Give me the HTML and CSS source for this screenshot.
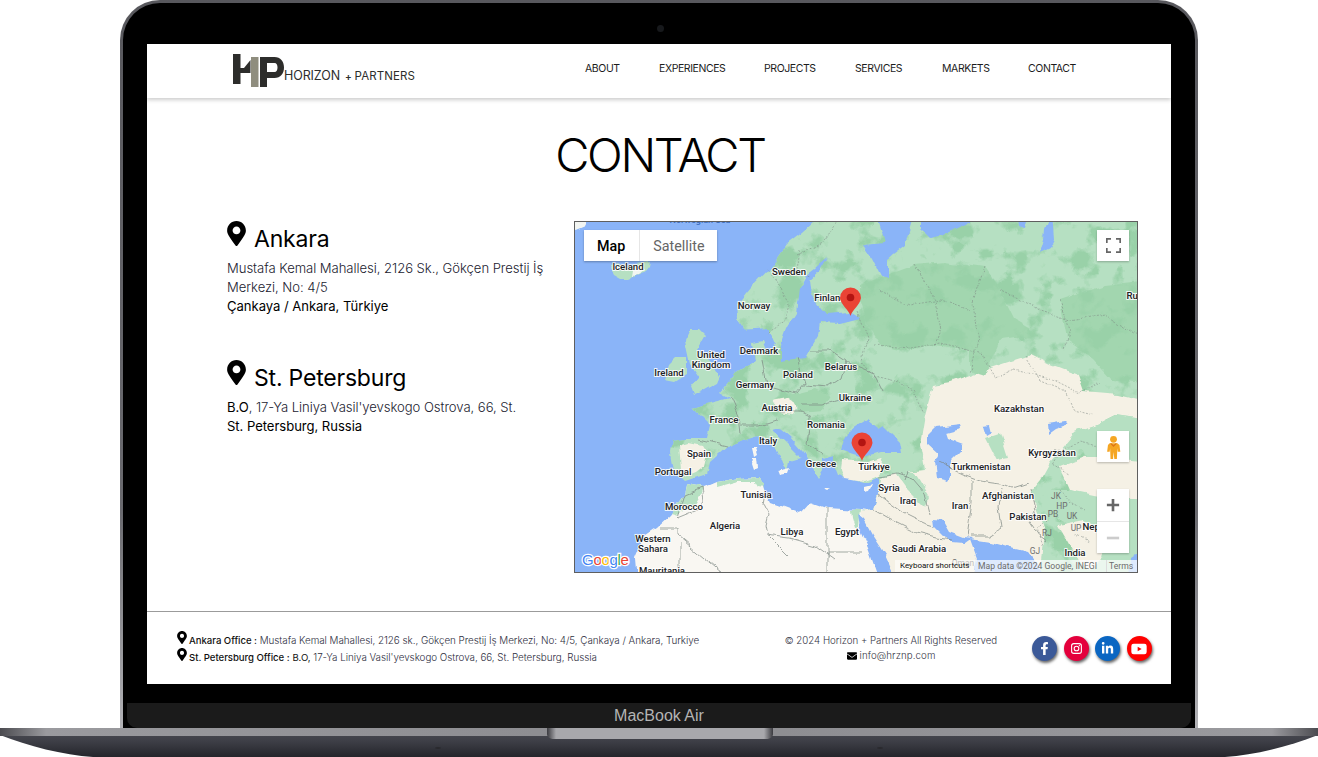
FILE: index.html
```html
<!DOCTYPE html>
<html lang="en">
<head>
<meta charset="utf-8">
<title>Horizon + Partners - Contact</title>
<link rel="stylesheet" href="styles.css">
</head>
<body>
<div class="stage">
  <div class="lid">
    <div class="camera"></div>
    <div class="screen">
      <header class="topbar">
        <a class="logo">
          <svg class="logo-mark" viewBox="0 0 52 34" aria-hidden="true">
            <path class="lm-dark" d="M0 0h7.500v30H0zM7.500 14h3.500l6.500-8v13H7.500z"/>
            <path class="lm-grey" d="M18 3h7.500v30H18z"/>
            <path class="lm-dark" d="M27 3h14.500c6 0 9.500 4.500 9.500 10.500S47.500 24 41.500 24H34v9h-7zM34 9v9h7.500c2 0 3-2 3-4.500S43.500 9 41.500 9z"/>
          </svg>
          <span class="logo-text">HORIZON<span class="logo-plus">+</span><span class="logo-second">PARTNERS</span></span>
        </a>
        <nav class="menu">
          <a class="w34">ABOUT</a>
          <a class="w65">EXPERIENCES</a>
          <a class="w51">PROJECTS</a>
          <a class="w47">SERVICES</a>
          <a class="w46">MARKETS</a>
          <a class="w50">CONTACT</a>
        </nav>
      </header>

      <main class="content">
        <h1 class="page-title">CONTACT</h1>
        <div class="contact-grid">
          <section class="offices">
            <article class="office office-first">
              <h2 class="office-name">
                <svg class="pin" viewBox="0 0 384 512" aria-hidden="true"><path d="M172.268 501.670C26.970 291.031 0 260.235 0 192 0 85.961 85.961 0 192 0s192 85.961 192 192c0 68.235-26.970 99.031-172.268 309.670-9.535 13.774-29.930 13.773-39.464 0zM192 272c44.183 0 80-35.817 80-80s-35.817-80-80-80-80 35.817-80 80 35.817 80 80 80z"/></svg>
                <span>Ankara</span>
              </h2>
              <p class="addr">Mustafa Kemal Mahallesi, 2126 Sk., Gökçen Prestij İş Merkezi, No: 4/5</p>
              <p class="addr strong">Çankaya / Ankara, Türkiye</p>
            </article>
            <article class="office">
              <h2 class="office-name">
                <svg class="pin" viewBox="0 0 384 512" aria-hidden="true"><path d="M172.268 501.670C26.970 291.031 0 260.235 0 192 0 85.961 85.961 0 192 0s192 85.961 192 192c0 68.235-26.970 99.031-172.268 309.670-9.535 13.774-29.930 13.773-39.464 0zM192 272c44.183 0 80-35.817 80-80s-35.817-80-80-80-80 35.817-80 80 35.817 80 80 80z"/></svg>
                <span>St. Petersburg</span>
              </h2>
              <p class="addr"><span class="dark">B.O</span>, 17-Ya Liniya Vasil'yevskogo Ostrova, 66, St.</p>
              <p class="addr strong">St. Petersburg, Russia</p>
            </article>
          </section>

          <div class="map">
            <svg class="map-canvas" viewBox="575 222 562 350" aria-label="Map">
              <defs>
                <filter id="rough" filterUnits="userSpaceOnUse" x="555" y="200" width="610" height="395" color-interpolation-filters="sRGB">
                  <feTurbulence type="fractalNoise" baseFrequency=".055" numOctaves="4" seed="7" result="n"/>
                  <feDisplacementMap in="SourceGraphic" in2="n" scale="7" xChannelSelector="R" yChannelSelector="G"/>
                </filter>
                <filter id="mottle" filterUnits="userSpaceOnUse" x="555" y="200" width="610" height="395" color-interpolation-filters="sRGB">
                  <feTurbulence type="fractalNoise" baseFrequency=".04" numOctaves="4" seed="11" result="n"/>
                  <feColorMatrix in="n" type="matrix" values="0 0 0 0 .6  0 0 0 0 .82  0 0 0 0 .66  7 0 0 0 -3.6" result="spots"/>
                  <feComposite in="spots" in2="SourceAlpha" operator="in" result="s"/>
                  <feMerge><feMergeNode in="SourceGraphic"/><feMergeNode in="s"/></feMerge>
                </filter>
              </defs>
              <rect class="sea" x="575" y="222" width="562" height="350"/>
              <g filter="url(#rough)">
                <!-- Greenland, Iceland -->
                <path class="ice" d="M570 215h21l-6 11-7 3-8 2z"/>
                <path class="green" d="M612 265l6-2 4 3 12-1 8-1 8-1-1 5-4 5-9 3-7 3-8 0-7-4-3-6z"/>
                <path class="ice" d="M634 270l7-2 2 3-5 4-5 1z"/>
                <!-- British isles -->
                <path class="green" d="M690 330l8 0 7 7-7 12 15 15 7 12-3 7-13 7-10 5-3-8 8-10-9-13-5-23z"/>
                <path class="green" d="M675 358l12 0 0 16-13 8-10-2 5-16z"/>
                <!-- Africa -->
                <path class="sand" d="M637 582L635 558 645 535 657 527 670 515 685 495 687 485 703 488 717 482 740 478 760 477 765 492 770 502 787 508 800 513 810 502 827 508 860 510 872 512 900 582z"/>
                <path class="green" d="M685 495l2-10 16 3-2 6-6 10-8 5-9 6-7-2 8-10zM717 482l23-4 20-1 4 10-6-1-3-5-16 0-22 6zM851 510l9 0-2 18-3 0-3-10z"/>
                <!-- Eurasia -->
                <path class="green" filter="url(#mottle)" d="M825 212L803 232 786 245 770 268 752 287 737 305 738 320 745 330 752 342 755 362 737 372 720 392 730 398 703 405 693 408 710 425 707 438 685 438 672 440 670 452 673 470 685 482 707 475 710 462 727 447 747 438 757 435 770 445 783 458 788 470 790 460 800 457 785 442 772 430 779 428 790 437 803 452 810 465 818 478 823 470 823 458 833 455 833 462 838 475 863 482 867 482 878 477 878 495 873 510 860 512 900 582 1150 582 1150 212z"/>
                <!-- dry regions -->
                <path class="tan" d="M933 385L950 382 990 368 1030 355 1050 365 1077 375 1083 392 1118 395 1150 403 1150 420 1115 415 1095 425 1075 432 1060 450 1050 462 1040 480 1030 492 1045 530 1040 582 900 582 870 540 860 512 873 510 878 495 880 478 905 472 925 470 920 445 925 415z"/>
                <path class="tan" d="M1060 468L1085 458 1115 458 1150 462 1150 500 1115 498 1085 495 1070 490z"/>
                <path class="tan" d="M678 445l10-3 14 3 5 8-3 14-8 6-10 4-6-8z"/>
                <path class="tan" d="M842 460l25 2 13-4 6 8-8 10-14 5-20-3-3-8z"/>
                <!-- mountains / forest -->
                <path class="deep" filter="url(#mottle)" d="M860 285L915 265 945 262 985 268 1000 290 1015 320 1040 335 1000 340 985 375 970 370 970 350 935 345 900 350 880 345 868 325 860 300z"/>
                <path class="deep" filter="url(#mottle)" d="M1060 300L1105 285 1150 280 1150 385 1112 380 1092 358 1067 340z"/>
                <path class="green" d="M1075 432L1095 425 1115 415 1150 420 1150 458 1115 458 1085 456z"/>
                <path class="green" d="M1045 490L1070 490 1110 498 1150 500 1150 582 1112 582 1097 545 1072 530 1052 510z"/>
                <path class="tan" d="M1058 525L1085 520 1107 532 1102 557 1088 571 1073 551z"/>
                <path class="green" d="M884 430L906 442 916 467 902 472 887 464 882 446z"/>
                <path class="green" d="M985 438L1000 433 1008 458 996 460z"/>
                <path class="green" d="M895 472L915 472 930 497 925 507 907 489z"/>
                <path class="tan" d="M772 400l15-3 12 8-5 10-14-2z"/>
                <path class="deep" d="M790 395l25-6 15 8-8 14-22 2z"/>
                <!-- seas -->
                <path class="sea" d="M740 330L768 328 775 345 768 355 762 340 752 342z"/>
                <path class="sea" d="M827 258L815 268 807 274 800 288 797 312 787 328 782 342 780 350 780 362 805 358 812 345 818 335 820 322 840 323 860 318 850 312 825 314 811 297 809 280 820 270z"/>
                <path class="sea" d="M875 210L915 210 905 245 888 258 888 278 880 276 872 260 862 245 885 243z"/>
                <path class="sea" d="M920 210L990 210 963 225 943 235 930 238 920 228z"/>
                <path class="sea" d="M1017 210h13l-5 18-6-2zM1045 228l7-18 2 30-4 8-10 5 4-14z"/>
                <path class="sea" d="M846 435L855 428 868 420 878 428 883 425 900 442 902 452 880 452 863 457 850 453 840 450 843 440z"/>
                <path class="sea" d="M928 435L936 427 960 424 961 429 946 433 948 439 961 444 961 452 951 462 951 476 948 481 936 478 934 463 939 453 928 443z"/>
                <path class="sea" d="M858 515L864 520 872 535 885 555 897 582 880 582 868 548 860 530z"/>
                <path class="sea" d="M932 517L942 518 950 532 963 537 972 538 965 543 953 542 943 535 933 525z"/>
                <path class="sea" d="M970 539L990 542 1027 552 1032 558 1040 567 1050 582 973 582 977 558z"/>
                <path class="sea" d="M1130 558L1150 545 1150 582 1129 582z"/>
                <path class="sea" d="M984 425l6-1 2 8-5 3zM1048 423l18-3 4 4-14 5-7 5z"/>
                <!-- islands -->
                <path class="sand" d="M752 448l3 0 2 7-3 2zM752 458l4 0 1 10-4 2-2-6zM777 470l14-3-2 6-10 2zM824 488l8 0-4 2zM864 486l8-2-3 6-5 1z"/>
                <!-- borders -->
                <g class="border">
                  <path d="M660 528h18M678 528v8l50 42M685 495l17-7 2 12-4 9-22 9zM680 543v40h12M766 492l-2 12 5 10-3 12 2 10 20 20M766 536l24 3 25 7 18 13M827 508v75M827 553h35"/>
                  <path d="M727 447l-30-7M730 398l8 18 2 18M740 425l20 0 16-5M777 412l25 0 10 5M810 417l-3 28 17 8M800 405l22 0 25-7M762 360l5 25 30 8 8-10-8-25M805 385l23 2 12-8 5-18-15-10-20 0M845 362l15 5 12 5 10 20"/>
                  <path d="M878 477l20-3 15 5 12 14 5 20M905 480l3-8M878 495l25 18 20 10 10 3M873 510l14 8 30 15 20 5 17 2"/>
                  <path d="M938 462l25 12 16 6 22 3 12 5 15-5M1003 488l-5 18 3 22-12 8-19 0M972 480l0 22-5 35M1030 490l5 20-5 12 10 15 7 5"/>
                </g>
                <g class="border dashed">
                  <path d="M767 268l12 16 10 20-5 18-17 10M800 250l-3 20 13 5M797 255l25-12 15-20"/>
                  <path d="M857 312l10 25-5 25 12 14 25 6 15 8 10 22M875 345l35 3 30-5 40 10 15 25 20-8 35 8 30 15 20-10M915 265l20 35 5 30-5 15M985 268l-12 35 5 40-8 30M1000 290l40 20 30 10 35-5 32 20M1025 355l15 25 25 10 8 20 20 5M1060 300l10 30-5 20M880 290l30 15 30-5 30 10"/>
                  <path d="M1030 455l30-5 20-8 22 5 15 13M1060 450l-8 15 18 10M1060 490l10 12 15 8M1045 520l-8 8 6 18M1075 535l15 8"/>
                </g>
              </g>
              <!-- labels -->
              <text class="sea-label" x="700" y="223">Norwegian Sea</text>
              <g class="lbl">
                <text x="628" y="270">Iceland</text><text x="789" y="275">Sweden</text><text x="754" y="309">Norway</text><text x="830" y="301">Finland</text><text x="1141" y="299">Russia</text>
                <text x="711" y="358">United</text><text x="711" y="368">Kingdom</text><text x="759" y="354">Denmark</text><text x="669" y="376">Ireland</text><text x="798" y="378">Poland</text><text x="841" y="370">Belarus</text><text x="755" y="388">Germany</text><text x="855" y="401">Ukraine</text><text x="1019" y="412">Kazakhstan</text><text x="777" y="411">Austria</text><text x="724" y="423">France</text><text x="826" y="428">Romania</text><text x="768" y="444">Italy</text><text x="699" y="457">Spain</text><text x="821" y="467">Greece</text><text x="874" y="470">Türkiye</text><text x="981" y="470">Turkmenistan</text><text x="1052" y="456">Kyrgyzstan</text><text x="673" y="475">Portugal</text><text x="889" y="491">Syria</text><text x="756" y="498">Tunisia</text><text x="908" y="504">Iraq</text><text x="1008" y="499">Afghanistan</text><text x="960" y="509">Iran</text><text x="684" y="510">Morocco</text><text x="1028" y="520">Pakistan</text><text x="725" y="529">Algeria</text><text x="792" y="535">Libya</text><text x="847" y="535">Egypt</text><text x="653" y="542">Western</text><text x="653" y="552">Sahara</text><text x="919" y="552">Saudi Arabia</text><text x="1075" y="556">India</text><text x="1095" y="530">Nepal</text><text x="662" y="574">Mauritania</text>
              </g>
              <g class="lbl-small">
                <text x="1056" y="499">JK</text><text x="1062" y="509">HP</text><text x="1053" y="517">PB</text><text x="1072" y="519">UK</text><text x="1076" y="531">UP</text><text x="1047" y="536">RJ</text><text x="1035" y="554">GJ</text><text x="963" y="566">Oman</text>
              </g>
              <!-- map pins -->
              <g class="marker">
                <path d="M850.500 316c-1.500-6-9.500-11-10.500-18a10.500 10.500 0 1 1 21 0c-1 7-9 12-10.500 18z"/>
                <circle cx="850.500" cy="297.500" r="3.800"/>
              </g>
              <g class="marker">
                <path d="M862 461c-1.500-6-9.500-11-10.500-18a10.500 10.500 0 1 1 21 0c-1 7-9 12-10.500 18z"/>
                <circle cx="862" cy="442.500" r="3.800"/>
              </g>
            </svg>

            <div class="map-type">
              <span class="map-tab active">Map</span>
              <span class="map-tab">Satellite</span>
            </div>
            <button class="map-btn map-full" aria-label="Fullscreen">
              <svg viewBox="0 0 18 18" class="fs-ico"><path d="M1 6V1h5M12 1h5v5M17 12v5h-5M6 17H1v-5"/></svg>
            </button>
            <button class="map-btn map-peg" aria-label="Street View">
              <svg viewBox="0 0 20 28" class="peg-ico">
                <circle class="peg-body" cx="10" cy="5" r="4"/>
                <path class="peg-body" d="M5.500 9.500h9l2.500 2 1 8h-3l-.5-4-.5 12.500h-3L10 20l-.5 8h-3L6 15.500l-.5 4h-3l1-8z"/>
                <path class="peg-tie" d="M6 10l4 4 4-4-1.500-.5L10 12 7.500 9.500z"/>
              </svg>
            </button>
            <div class="map-zoom">
              <button class="zoom-btn" aria-label="Zoom in"><svg viewBox="0 0 16 16" class="zoom-ico"><path d="M1 8h14M8 1v14"/></svg></button>
              <button class="zoom-btn faded" aria-label="Zoom out"><svg viewBox="0 0 16 16" class="zoom-ico"><path d="M1 8h14"/></svg></button>
            </div>
            <div class="google"><span class="g-b">G</span><span class="g-r">o</span><span class="g-y">o</span><span class="g-b">g</span><span class="g-g">l</span><span class="g-r">e</span></div>
            <div class="attrib">
              <span class="attr-keys">Keyboard shortcuts</span>
              <span class="attr-data">Map data ©2024 Google, INEGI</span>
              <span class="attr-terms">Terms</span>
            </div>
          </div>
        </div>
      </main>

      <footer class="footer">
        <div class="foot-addr">
          <p class="foot-line">
            <svg class="foot-pin" viewBox="0 0 384 512" aria-hidden="true"><path d="M172.268 501.670C26.970 291.031 0 260.235 0 192 0 85.961 85.961 0 192 0s192 85.961 192 192c0 68.235-26.970 99.031-172.268 309.670-9.535 13.774-29.930 13.773-39.464 0zM192 272c44.183 0 80-35.817 80-80s-35.817-80-80-80-80 35.817-80 80 35.817 80 80 80z"/></svg>
            <span><b>Ankara Office :</b> Mustafa Kemal Mahallesi, 2126 sk., Gökçen Prestij İş Merkezi, No: 4/5, Çankaya / Ankara, Turkiye</span>
          </p>
          <p class="foot-line">
            <svg class="foot-pin" viewBox="0 0 384 512" aria-hidden="true"><path d="M172.268 501.670C26.970 291.031 0 260.235 0 192 0 85.961 85.961 0 192 0s192 85.961 192 192c0 68.235-26.970 99.031-172.268 309.670-9.535 13.774-29.930 13.773-39.464 0zM192 272c44.183 0 80-35.817 80-80s-35.817-80-80-80-80 35.817-80 80 35.817 80 80 80z"/></svg>
            <span><b>St. Petersburg Office :</b> <b class="bo">B.O,</b> 17-Ya Liniya Vasil'yevskogo Ostrova, 66, St. Petersburg, Russia</span>
          </p>
        </div>
        <div class="foot-center">
          <p>© 2024 Horizon + Partners All Rights Reserved</p>
          <p class="foot-mail">
            <svg class="mail" viewBox="0 0 512 384" aria-hidden="true"><path d="M0 48C0 21 21 0 48 0h416c27 0 48 21 48 48v12L256 240 0 60zM0 100v236c0 27 21 48 48 48h416c27 0 48-21 48-48V100L256 280z"/></svg>
            <span>info@hrznp.com</span>
          </p>
        </div>
        <div class="socials">
          <a class="soc fb"><svg viewBox="0 0 320 512"><path d="M279.140 288l14.220-92.660h-88.910v-60.130c0-25.350 12.420-50.060 52.240-50.060h40.420V6.260S260.430 0 225.360 0c-73.220 0-121.080 44.380-121.080 124.720v70.620H22.890V288h81.390v224h100.170V288z"/></svg></a>
          <a class="soc ig"><svg viewBox="0 0 24 24"><path class="ig-line" d="M7 3h10a4 4 0 0 1 4 4v10a4 4 0 0 1-4 4H7a4 4 0 0 1-4-4V7a4 4 0 0 1 4-4z"/><circle class="ig-line" cx="12" cy="12" r="4.300"/><circle cx="17.300" cy="6.700" r="1.200"/></svg></a>
          <a class="soc li"><svg viewBox="0 0 448 512"><path d="M100.280 448H7.400V148.900h92.880zM53.790 108.100C24.090 108.100 0 83.500 0 53.800a53.790 53.790 0 0 1 107.580 0c0 29.700-24.100 54.300-53.790 54.300zM447.900 448h-92.680V302.400c0-34.700-.7-79.200-48.290-79.200-48.290 0-55.690 37.700-55.690 76.700V448h-92.780V148.900h89.080v40.800h1.300c12.400-23.500 42.690-48.300 87.880-48.300 94 0 111.280 61.900 111.280 142.300V448z"/></svg></a>
          <a class="soc yt"><svg class="yt-ico" viewBox="0 0 24 18"><path fill-rule="evenodd" d="M4 1h16a3.500 3.500 0 0 1 3.500 3.500v9A3.500 3.500 0 0 1 20 17H4a3.500 3.500 0 0 1-3.500-3.500v-9A3.500 3.500 0 0 1 4 1zm6 4.500v7l6-3.500z"/></svg></a>
        </div>
      </footer>
    </div>
    <div class="chin">MacBook Air</div>
  </div>
  <svg class="base" viewBox="0 0 1318 29" aria-hidden="true">
    <defs>
      <linearGradient id="baseBody" x1="0" y1="0" x2="0" y2="1">
        <stop offset="0" stop-color="#4d4e55"/>
        <stop offset="0.45" stop-color="#3e3f47"/>
        <stop offset="1" stop-color="#24252b"/>
      </linearGradient>
      <linearGradient id="baseTop" x1="0" y1="0" x2="1" y2="0">
        <stop offset="0" stop-color="#4b4b50"/>
        <stop offset="0.035" stop-color="#9a9a9e"/>
        <stop offset="0.5" stop-color="#8b8b8f"/>
        <stop offset="0.965" stop-color="#9a9a9e"/>
        <stop offset="1" stop-color="#4b4b50"/>
      </linearGradient>
      <linearGradient id="notch" x1="0" y1="0" x2="1" y2="0">
        <stop offset="0" stop-color="#3a3a3f"/>
        <stop offset="0.04" stop-color="#a8a8ac"/>
        <stop offset="0.96" stop-color="#a8a8ac"/>
        <stop offset="1" stop-color="#3a3a3f"/>
      </linearGradient>
    </defs>
    <path fill="url(#baseBody)" d="M0 0H1318V7C1290 18 1255 27 1225 29H93C63 27 28 18 0 7z"/>
    <path fill="url(#baseTop)" d="M0 0H1318V8H1306L12 8H0z"/>
    <path fill="url(#notch)" d="M547 0H773V6C773 9 770 11 766 11H554C550 11 547 9 547 6z"/>
    <ellipse fill="#2a2a2e" cx="438" cy="20" rx="3" ry="1"/>
    <ellipse fill="#2a2a2e" cx="880" cy="20" rx="3" ry="1"/>
  </svg>
</div>
</body>
</html>
```

FILE: styles.css
```css
* { box-sizing: border-box; }
html, body { margin: 0; padding: 0; background: #fff; }
body { font-family: Inter, "Liberation Sans", sans-serif; color: #000; }
p, h1, h2 { margin: 0; }
a { color: inherit; text-decoration: none; }

.stage { width: 1318px; height: 757px; overflow: hidden; background: #fff; }

/* laptop */
.lid {
  position: relative;
  width: 1078px;
  height: 728px;
  margin-left: 120px;
  padding: 41px 24px 0 24px;
  border: 3px solid transparent;
  border-bottom: 0;
  border-radius: 40px 40px 0 0;
  background:
    linear-gradient(#000, #000) padding-box,
    linear-gradient(#58585d, #6a6a6f 70%, #b2b2b6) border-box;
}
.camera {
  position: absolute;
  left: 534px;
  top: 22px;
  width: 7px;
  height: 7px;
  border-radius: 50%;
  background: #17191c;
}
.screen {
  width: 1024px;
  height: 640px;
  display: flex;
  flex-direction: column;
  background: #fff;
}
.chin {
  height: 25px;
  margin: 19px -20px 0;
  border-radius: 0 0 10px 10px;
  background: #1b1b1b;
  color: #b4b4b4;
  font: 16px/26px "Liberation Sans", sans-serif;
  text-align: center;
}
.base { display: block; width: 1318px; height: 29px; }

/* header */
.topbar {
  height: 54px;
  flex: none;
  display: flex;
  align-items: flex-start;
  padding-left: 86px;
  background: #fff;
  box-shadow: 0 2px 4px rgba(0, 0, 0, .2);
  position: relative;
}
.logo { display: flex; align-items: flex-start; padding-top: 10px; }
.logo-mark { width: 52px; height: 34px; display: block; }
.lm-dark { fill: #2d2d2b; }
.lm-grey { fill: #8f8d7e; }
.logo-text {
  margin: 13px 0 0 -1px;
  font: 400 12.5px/17px Inter, sans-serif;
  color: #2d2d2b;
  white-space: nowrap;
  letter-spacing: -.1px;
}
.logo-plus { margin: 0 3px 0 5px; font-weight: 600; font-size: 10px; }
.logo-second { font-weight: 400; letter-spacing: .1px; font-size: 11.5px; }
.menu { margin-left: 170px; display: flex; gap: 40px; padding-top: 18px; }
.menu a {
  display: block;
  font: 400 10.5px/14px Inter, sans-serif;
  color: #1c1c1c;
  white-space: nowrap;
  letter-spacing: -.42px;
}
.w34 { width: 34px; }
.w65 { width: 65px; }
.w51 { width: 51px; }
.w47 { width: 47px; }
.w46 { width: 46px; }
.w50 { width: 50px; }

/* main */
.content { flex: 1; padding: 0 33px 0 80px; min-height: 0; }
.page-title {
  height: 123px;
  padding: 29px 45px 0 0;
  font: 300 47px/56px Inter, sans-serif;
  text-align: center;
  letter-spacing: -2.3px;
}
.contact-grid { display: grid; grid-template-columns: 347px 564px; }
.offices { padding-right: 26px; }
.office-name {
  display: flex;
  align-items: flex-start;
  gap: 8px;
  height: 38px;
  font: 400 23px/36px Inter, sans-serif;
  letter-spacing: -.2px;
}
.pin { width: 19px; height: 25px; fill: #000; flex: none; }
.office-first { height: 139px; }
.addr {
  font: 300 13.1px/19px Inter, sans-serif;
  color: #222230;
  letter-spacing: -.05px;
}
.addr.strong { font-weight: 400; color: #000; }
.addr .dark { color: #000; font-weight: 400; }

/* map */
.map {
  position: relative;
  width: 564px;
  height: 352px;
  border: 1px solid #5f5f5f;
  overflow: hidden;
  background: #8ab4f8;
}
.map-canvas { display: block; width: 562px; height: 350px; }
.sea { fill: #8ab4f8; }
.ice { fill: #f2f5f2; }
.green { fill: #b6e0c2; }
.deep { fill: #a2d6af; }
.sand { fill: #f9f7f2; }
.tan { fill: #f5f1e5; }
.border { fill: none; stroke: #7d8682; stroke-width: .7; }
.border.dashed { stroke-dasharray: 2 1.500; opacity: .75; }
.sea-label { font: 500 9px Roboto, sans-serif; fill: #3f6fc0; text-anchor: middle; }
.lbl text {
  font: 500 9.6px Roboto, sans-serif;
  fill: #202124;
  text-anchor: middle;
  stroke: #fff;
  stroke-width: 2px;
  paint-order: stroke;
  stroke-opacity: .85;
}
.lbl-small text { font: 400 8.4px Roboto, sans-serif; fill: #6d6d6d; text-anchor: middle; }
.marker path { fill: #ea4335; }
.marker circle { fill: #b31412; }

.map-type {
  position: absolute;
  left: 9px;
  top: 8px;
  display: flex;
  height: 31px;
  background: #fff;
  box-shadow: 0 1px 2px rgba(0, 0, 0, .3);
  font: 400 14.3px/32px Roboto, sans-serif;
  color: #666;
}
.map-tab { padding: 0 13px; }
.map-tab.active { padding: 0 14px 0 13px; color: #000; font-weight: 500; border-right: 1px solid #e6e6e6; }
.map-btn {
  position: absolute;
  left: 522px;
  width: 32px;
  height: 31px;
  padding: 0;
  border: 0;
  background: #fff;
  box-shadow: 0 1px 2px rgba(0, 0, 0, .25);
  display: flex;
  align-items: center;
  justify-content: center;
}
.map-full { top: 8px; }
.map-peg { top: 209px; }
.fs-ico { width: 15px; height: 15px; fill: none; stroke: #666; stroke-width: 2; }
.peg-ico { width: 17px; height: 26px; }
.peg-body { fill: #f5a623; }
.peg-tie { fill: #d9731a; }
.map-zoom {
  position: absolute;
  left: 522px;
  top: 267px;
  width: 32px;
  height: 64px;
  display: flex;
  flex-direction: column;
  background: #fff;
  box-shadow: 0 1px 2px rgba(0, 0, 0, .25);
}
.zoom-btn {
  height: 32px;
  padding: 0;
  border: 0;
  background: transparent;
  display: flex;
  align-items: center;
  justify-content: center;
}
.zoom-btn.faded { border-top: 1px solid #e6e6e6; }
.zoom-ico { width: 14px; height: 14px; fill: none; stroke: #666; stroke-width: 3; }
.zoom-btn.faded .zoom-ico { stroke: #ccc; }
.google {
  position: absolute;
  left: 7px;
  bottom: 3px;
  font: 500 15px/18px "Liberation Sans", sans-serif;
  letter-spacing: -.3px;
  -webkit-text-stroke: 2.500px #fff;
  paint-order: stroke fill;
}
.g-b { color: #4285f4; }
.g-r { color: #ea4335; }
.g-y { color: #fbbc05; }
.g-g { color: #34a853; }
.attrib {
  position: absolute;
  right: 0;
  bottom: 0;
  height: 12px;
  display: flex;
  font: 400 8px/12px Roboto, sans-serif;
  white-space: nowrap;
}
.attr-keys { width: 80px; padding-left: 5px; color: #111; background: rgba(255, 255, 255, .55); }
.attr-data { width: 131px; padding-left: 3px; color: #6b6b6b; background: rgba(255, 255, 255, .72); font-size: 8.6px; }
.attr-terms { width: 31px; padding-left: 2px; color: #6b6b6b; background: rgba(255, 255, 255, .72); border-left: 1px solid #ddd; font-size: 8.6px; }

/* footer */
.footer {
  height: 73px;
  flex: none;
  display: flex;
  padding: 0 0 0 30px;
  border-top: 1px solid #9b9b9b;
}
.foot-addr { width: 600px; padding-top: 20px; }
.foot-line {
  display: flex;
  align-items: flex-start;
  height: 17px;
  font: 300 9.85px/17px Inter, sans-serif;
  color: #2e2e3e;
  white-space: nowrap;
  letter-spacing: -.03px;
}
.foot-line b { font-weight: 500; font-size: 9.6px; color: #111; }
.foot-line b.bo { font-weight: 400; }
.foot-pin { width: 10px; height: 13px; margin: -1px 2px 0 0; fill: #000; flex: none; }
.foot-center {
  width: 224px;
  margin-left: 2px;
  padding-top: 21px;
  text-align: center;
  font: 300 9.7px/15px Inter, sans-serif;
  color: #333344;
  white-space: nowrap;
}
.foot-mail { display: flex; justify-content: center; align-items: center; gap: 3px; letter-spacing: .1px; }
.mail { width: 10px; height: 8px; fill: #000; }
.socials { display: flex; gap: 6.5px; margin-left: 29px; padding-top: 24px; }
.soc {
  width: 25px;
  height: 25px;
  border-radius: 50%;
  display: flex;
  align-items: center;
  justify-content: center;
  box-shadow: 1px 2px 3px rgba(0, 0, 0, .6);
}
.soc svg { fill: #fff; width: 13px; height: 13px; }
.soc svg.yt-ico { width: 16px; height: 12px; }
.fb { background: #3b5998; }
.ig { background: #e4003c; }
.li { background: #0a66c2; }
.yt { background: #f00; }
.ig-line { fill: none; stroke: #fff; stroke-width: 2; }
```
